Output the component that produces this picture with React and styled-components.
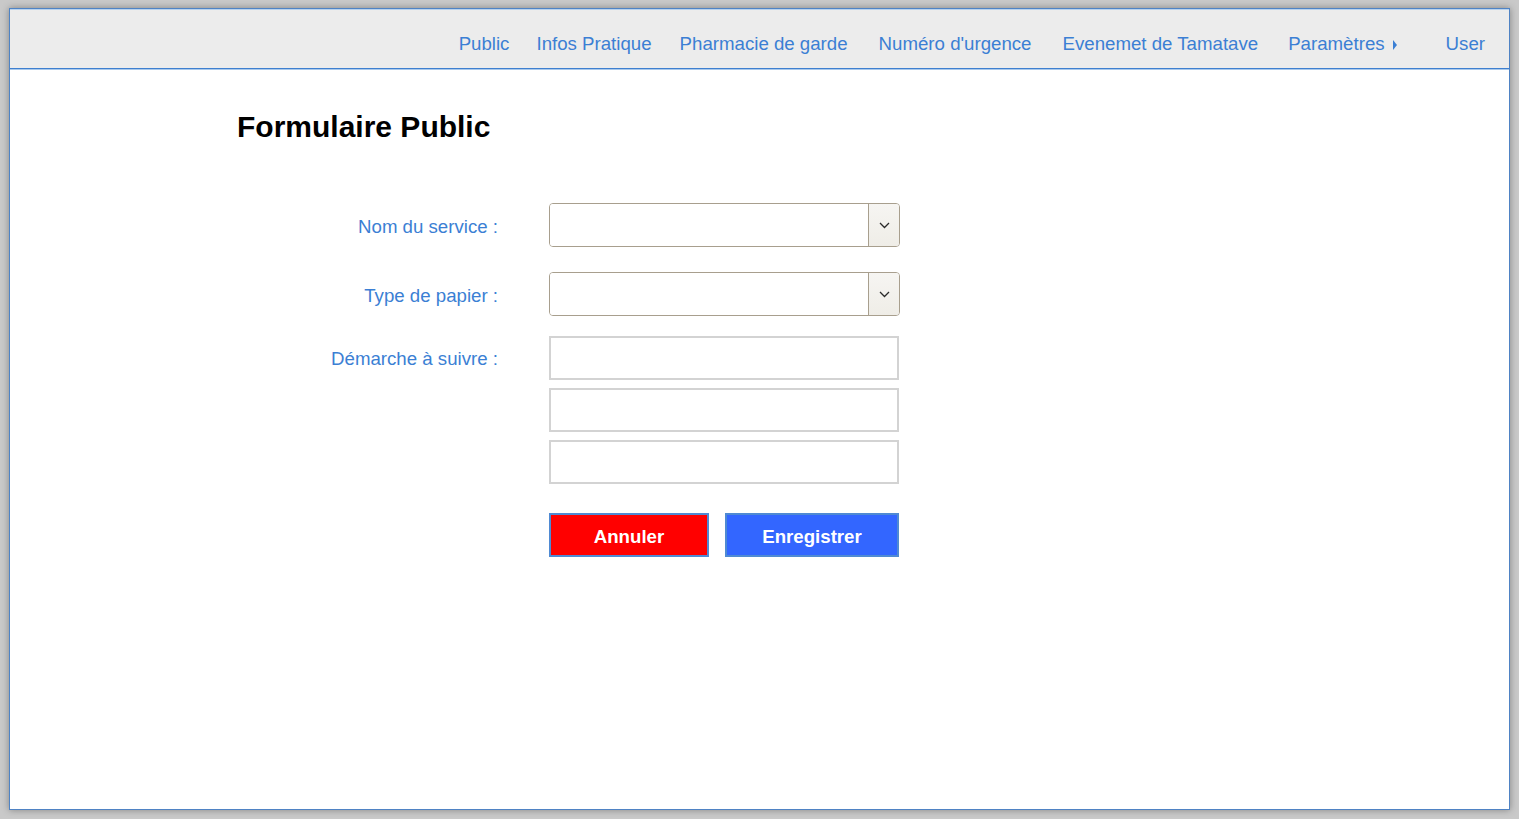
import React from "react";
import styled, { createGlobalStyle } from "styled-components";

const Global = createGlobalStyle`
  html, body { margin: 0; padding: 0; }
  body {
    background: #c9c9c9;
    font-family: "Liberation Sans", Arial, sans-serif;
  }
  * { box-sizing: border-box; }
`;

const Page = styled.div`
  padding: 8px 9px 9px 9px;
  height: 819px;
`;

const Window = styled.div`
  width: 1501px;
  height: 802px;
  background: #ffffff;
  border: 1px solid #4f83c4;
  box-shadow: 0 0 7px rgba(0, 0, 0, 0.35);
  display: flex;
  flex-direction: column;
`;

const NavBar = styled.nav`
  height: 60px;
  background: #ececec;
  border-top: 1px solid #b9d3ef;
  border-bottom: 1px solid #3f7fcf;
  box-shadow: 0 1px 0 #a9c9ec;
  display: flex;
  justify-content: flex-end;
  align-items: flex-start;
  padding: 23px 24px 0 0;
`;

const NavLink = styled.a`
  font-size: 18.67px;
  line-height: 22px;
  color: #3b7fd4;
  text-decoration: none;
  display: flex;
  align-items: center;
  gap: 8px;
  margin-left: ${(p) => p.$ml || 0}px;
  cursor: pointer;
`;

const SubArrow = styled.span`
  display: inline-block;
  width: 0;
  height: 0;
  border-top: 5px solid transparent;
  border-bottom: 5px solid transparent;
  border-left: 4px solid #3b7fd4;
  margin-top: 2px;
`;

const Main = styled.main`
  padding: 40px 0 0 227px;
  display: flex;
  flex-direction: column;
`;

const Title = styled.h1`
  margin: 0;
  font-size: 30px;
  line-height: 36px;
  font-weight: bold;
  color: #000;
`;

const Form = styled.form`
  display: flex;
  flex-direction: column;
  margin-top: 58px;
`;

const Row = styled.div`
  display: grid;
  grid-template-columns: 261px 351px;
  column-gap: 51px;
  align-items: ${(p) => (p.$top ? "start" : "center")};
  margin-top: ${(p) => p.$mt || 0}px;
`;

const Label = styled.label`
  text-align: right;
  font-size: 18.67px;
  color: #3b7fd4;
  padding-top: ${(p) => (p.$tall ? 1 : 3)}px;
  line-height: ${(p) => (p.$tall ? "44px" : "22px")};
`;

const SelectBox = styled.div`
  display: flex;
  height: 44px;
  width: 351px;
  border: 1px solid #a89f8e;
  border-radius: 4px;
  overflow: hidden;
  background: #fff;
`;

const NativeSelect = styled.select`
  flex: 1;
  border: none;
  outline: none;
  appearance: none;
  background: #fff;
  font-family: inherit;
  font-size: 16px;
`;

const DropButton = styled.div`
  width: 31px;
  border-left: 1px solid #a89f8e;
  background: linear-gradient(#f6f5f2, #efede7);
  display: flex;
  align-items: center;
  justify-content: center;
`;

const Stack = styled.div`
  display: flex;
  flex-direction: column;
  gap: 8px;
`;

const TextInput = styled.input`
  width: 350px;
  height: 44px;
  border: 2px solid #d3d3d3;
  background: #fff;
  outline: none;
  font-family: inherit;
  font-size: 16px;
  padding: 0 8px;
`;

const Buttons = styled.div`
  display: flex;
  gap: 16px;
`;

const Button = styled.button`
  height: 44px;
  width: ${(p) => p.$w}px;
  background: ${(p) => p.$bg};
  border: 2px solid #4f8ad3;
  color: #fff;
  font-family: "Liberation Sans", Arial, sans-serif;
  font-weight: bold;
  font-size: 18.67px;
  cursor: pointer;
  padding: 3px 0 0 0;
`;

const Chevron = () => (
  <svg width="11" height="7" viewBox="0 0 11 7">
    <polyline points="1,1 5.5,5.5 10,1" fill="none" stroke="#2a2a2a" strokeWidth="1.3" />
  </svg>
);

const Select = () => (
  <SelectBox>
    <NativeSelect defaultValue="">
      <option value=""></option>
    </NativeSelect>
    <DropButton>
      <Chevron />
    </DropButton>
  </SelectBox>
);

export default function App() {
  return (
    <>
      <Global />
      <Page>
        <Window>
          <NavBar>
            <NavLink>Public</NavLink>
            <NavLink $ml={27}>Infos Pratique</NavLink>
            <NavLink $ml={28}>Pharmacie de garde</NavLink>
            <NavLink $ml={31}>Numéro d'urgence</NavLink>
            <NavLink $ml={31}>Evenemet de Tamatave</NavLink>
            <NavLink $ml={30}>
              Paramètres <SubArrow />
            </NavLink>
            <NavLink $ml={49}>User</NavLink>
          </NavBar>
          <Main>
            <Title>Formulaire Public</Title>
            <Form onSubmit={(e) => e.preventDefault()}>
              <Row>
                <Label>Nom du service :</Label>
                <Select />
              </Row>
              <Row $mt={25}>
                <Label>Type de papier :</Label>
                <Select />
              </Row>
              <Row $mt={20} $top>
                <Label $tall>Démarche à suivre :</Label>
                <Stack>
                  <TextInput />
                  <TextInput />
                  <TextInput />
                </Stack>
              </Row>
              <Row $mt={29}>
                <span />
                <Buttons>
                  <Button type="button" $w={160} $bg="#ff0000">Annuler</Button>
                  <Button type="submit" $w={174} $bg="#3366ff">Enregistrer</Button>
                </Buttons>
              </Row>
            </Form>
          </Main>
        </Window>
      </Page>
    </>
  );
}
